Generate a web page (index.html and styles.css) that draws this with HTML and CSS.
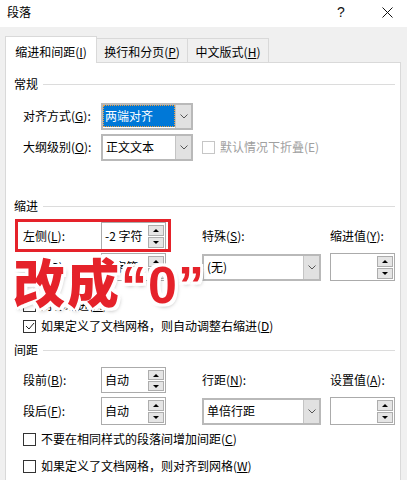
FILE: index.html
```html
<!DOCTYPE html>
<html lang="zh-CN">
<head>
<meta charset="utf-8">
<title>段落</title>
<link rel="stylesheet" href="styles.css">
</head>
<body>
<div class="titlebar">
  <span class="title">段落</span>
  <div class="tb-btns">
    <span class="tb-btn help">?</span>
    <span class="tb-btn close"><svg width="11" height="11" viewBox="0 0 11 11"><path d="M0.5 0.5L10.5 10.5M10.5 0.5L0.5 10.5" stroke="#111" stroke-width="1" fill="none"/></svg></span>
  </div>
</div>
<div class="main">
  <div class="tabs">
    <div class="tab active">缩进和间距(<u>I</u>)</div>
    <div class="tab">换行和分页(<u>P</u>)</div>
    <div class="tab short">中文版式(<u>H</u>)</div>
  </div>
  <div class="panel">
    <div class="sec mt-13">常规</div>
    <div class="row mt-10 h-28">
      <span class="lbl">对齐方式(<u>G</u>):</span>
      <div class="combo small">
        <span class="combo-val"><span class="sel">两端对齐</span></span>
        <span class="combo-btn"><svg width="8" height="5" viewBox="0 0 8 5"><path d="M0.5 0.5L4 4L7.5 0.5" stroke="#555" fill="none"/></svg></span>
      </div>
    </div>
    <div class="row mt-3 h-28">
      <span class="lbl">大纲级别(<u>O</u>):</span>
      <div class="combo small">
        <span class="combo-val">正文文本</span>
        <span class="combo-btn"><svg width="8" height="5" viewBox="0 0 8 5"><path d="M0.5 0.5L4 4L7.5 0.5" stroke="#555" fill="none"/></svg></span>
      </div>
      <span class="check disabled span2"><span class="box"></span><span class="ctext">默认情况下折叠(E)</span></span>
    </div>

    <div class="sec mt-37">缩进</div>
    <div class="row mt-8 h-28">
      <span class="lbl">左侧(<u>L</u>):</span>
      <div class="spin">
        <span class="spin-val">-2 字符</span>
        <span class="arrows"><span class="up"></span><span class="dn"></span></span>
      </div>
      <span class="lbl">特殊(<u>S</u>):</span>
      <span class="lbl">缩进值(<u>Y</u>):</span>
    </div>
    <div class="row mt-3 h-28">
      <span class="lbl">右侧(<u>R</u>):</span>
      <div class="spin">
        <span class="spin-val">0 字符</span>
        <span class="arrows"><span class="up"></span><span class="dn"></span></span>
      </div>
      <div class="combo wide thin">
        <span class="combo-val">(无)</span>
        <span class="combo-btn"><svg width="8" height="5" viewBox="0 0 8 5"><path d="M0.5 0.5L4 4L7.5 0.5" stroke="#555" fill="none"/></svg></span>
      </div>
      <div class="spin">
        <span class="spin-val"></span>
        <span class="arrows"><span class="up"></span><span class="dn"></span></span>
      </div>
    </div>
    <div class="row mt-15 h-18">
      <span class="check span4"><span class="box"></span><span class="ctext">对称缩进(<u>M</u>)</span></span>
    </div>
    <div class="row mt-3 h-18">
      <span class="check span4"><span class="box checked"><svg width="10" height="10" viewBox="0 0 10 10"><path d="M1 5L4 8L9 2" stroke="#222" fill="none"/></svg></span><span class="ctext">如果定义了文档网格，则自动调整右缩进(<u>D</u>)</span></span>
    </div>

    <div class="sec mt-7">间距</div>
    <div class="row mt-9 h-26">
      <span class="lbl">段前(<u>B</u>):</span>
      <div class="spin">
        <span class="spin-val">自动</span>
        <span class="arrows"><span class="up"></span><span class="dn"></span></span>
      </div>
      <span class="lbl">行距(<u>N</u>):</span>
      <span class="lbl">设置值(<u>A</u>):</span>
    </div>
    <div class="row mt-4 h-28">
      <span class="lbl">段后(<u>F</u>):</span>
      <div class="spin">
        <span class="spin-val">自动</span>
        <span class="arrows"><span class="up"></span><span class="dn"></span></span>
      </div>
      <div class="combo wide thin">
        <span class="combo-val">单倍行距</span>
        <span class="combo-btn"><svg width="8" height="5" viewBox="0 0 8 5"><path d="M0.5 0.5L4 4L7.5 0.5" stroke="#555" fill="none"/></svg></span>
      </div>
      <div class="spin">
        <span class="spin-val"></span>
        <span class="arrows"><span class="up"></span><span class="dn"></span></span>
      </div>
    </div>
    <div class="row mt-5 h-18">
      <span class="check span4"><span class="box"></span><span class="ctext">不要在相同样式的段落间增加间距(<u>C</u>)</span></span>
    </div>
    <div class="row mt-9 h-18">
      <span class="check span4"><span class="box"></span><span class="ctext">如果定义了文档网格，则对齐到网格(<u>W</u>)</span></span>
    </div>

    <div class="highlight"></div>
    <div class="callout">改成<span class="latin">“0”</span></div>
  </div>
</div>
</body>
</html>
```
FILE: styles.css
```css
* { box-sizing: border-box; }
html, body { margin: 0; padding: 0; }
body {
  width: 407px;
  height: 480px;
  overflow: hidden;
  background: #f0f0f0;
  color: #000;
  font-family: "Noto Sans CJK SC", "Microsoft YaHei", sans-serif;
  font-size: 12px;
  line-height: 16px;
}
u { text-decoration: underline; text-underline-offset: 1px; }

/* title bar */
.titlebar {
  height: 27px;
  background: #fff;
  display: flex;
  align-items: center;
  padding-left: 7px;
  overflow: hidden;
}
.title { padding-bottom: 3px; }
.tb-btns {
  margin-left: auto;
  margin-right: -3px;
  display: flex;
  height: 100%;
}
.tb-btn {
  width: 46px;
  display: flex;
  align-items: center;
  justify-content: center;
}
.help {
  font-family: "Liberation Sans", sans-serif;
  font-size: 14px;
  color: #111;
  padding-bottom: 3px;
}
.close svg { display: block; margin-top: -3px; }

/* main */
.main {
  padding: 9px 6px 0 5px;
  height: 453px;
}
.tabs {
  display: flex;
  align-items: flex-end;
  margin-bottom: -1px;
}
.tab {
  height: 25px;
  width: 92px;
  border: 1px solid #d9d9d9;
  border-bottom: none;
  background: #f0f0f0;
  text-align: center;
  padding-top: 5px;
  margin-left: -1px;
}
.tab.short { width: 82px; }
.tab.active {
  margin-left: 0;
  height: 27px;
  padding-top: 7px;
  background: #fff;
  position: relative;
  z-index: 1;
}
.panel {
  position: relative;
  height: 430px;
  background: #fff;
  border: 1px solid #d9d9d9;
  padding: 0 5px 0 8px;
}

/* section headings */
.sec {
  display: flex;
  align-items: center;
  height: 16px;
}
.sec::after {
  content: "";
  flex: 1;
  height: 1px;
  background: #dcdcdc;
  margin-left: 5px;
}

/* rows */
.row {
  display: grid;
  grid-template-columns: 78px 101px 128px 65px;
  align-items: center;
  margin-left: 9px;
}
.h-18 { height: 18px; }
.h-26 { height: 26px; }
.h-28 { height: 28px; }
.mt-3 { margin-top: 3px; }
.mt-4 { margin-top: 4px; }
.mt-5 { margin-top: 5px; }
.mt-7 { margin-top: 7px; }
.mt-8 { margin-top: 8px; }
.mt-9 { margin-top: 9px; }
.mt-10 { margin-top: 10px; }
.mt-13 { margin-top: 13px; }
.mt-15 { margin-top: 15px; }
.mt-37 { margin-top: 37px; }
.span2 { grid-column: span 2; }
.span4 { grid-column: span 4; }

/* combobox */
.combo {
  display: flex;
  height: 27px;
  border: 2px solid #b9b9b9;
  background: #fff;
}
.combo.small { width: 92px; }
.combo.wide { width: 119px; }
.combo-val {
  flex: 1;
  display: flex;
  align-items: center;
  padding-left: 3px;
  white-space: nowrap;
}
.combo .sel {
  flex: 1;
  align-self: stretch;
  margin: 0 0 1px -3px;
  padding-left: 2px;
  display: flex;
  align-items: center;
  background: #0078d7;
  color: #fff;
  outline: 1px dotted #f0a040;
  outline-offset: -1px;
}
.combo-btn {
  width: 16px;
  background: #e1e1e1;
  border-left: 1px solid #c4c4c4;
  display: flex;
  align-items: center;
  justify-content: center;
}
.combo-btn svg { display: block; }

/* spin box */
.spin {
  display: flex;
  width: 65px;
  height: 28px;
  border: 1px solid #ababab;
  background: #fff;
}
.h-26 .spin { height: 26px; }
.spin-val {
  flex: 1;
  display: flex;
  align-items: center;
  padding-left: 3px;
  white-space: nowrap;
}
.arrows {
  width: 17px;
  display: flex;
  flex-direction: column;
  gap: 1px;
  padding: 2px 1px 1px 0;
}
.up, .dn {
  flex: 1;
  background: #e5e5e5;
  border: 1px solid #adadad;
  display: flex;
  align-items: center;
  justify-content: center;
}
.up::before, .dn::before {
  content: "";
  width: 0;
  height: 0;
  border-left: 3px solid transparent;
  border-right: 3px solid transparent;
}
.up::before { border-bottom: 3px solid #000; }
.dn::before { border-top: 3px solid #000; }

/* checkbox */
.check {
  display: flex;
  align-items: center;
  gap: 5px;
  white-space: nowrap;
}
.box {
  width: 13px;
  height: 13px;
  border: 1px solid #333;
  background: #fff;
  display: flex;
  align-items: center;
  justify-content: center;
  flex: none;
}
.box svg { display: block; }
.check.disabled { color: #a0a0a0; }
.check.disabled .box { border-color: #c6c6c6; }

/* annotation overlays */
.highlight {
  position: absolute;
  left: 9px;
  top: 156px;
  width: 156px;
  height: 33px;
  border: 3px solid #e5222a;
}
.callout {
  position: absolute;
  left: 7px;
  top: 192px;
  font-family: "Noto Sans CJK SC", sans-serif;
  font-weight: 900;
  font-size: 52px;
  line-height: 52px;
  letter-spacing: 2px;
  color: #e5222a;
  white-space: nowrap;
  text-shadow:
    -3px -3px 0 #fff, 3px -3px 0 #fff, -3px 3px 0 #fff, 3px 3px 0 #fff,
    0 -3px 0 #fff, 0 3px 0 #fff, -3px 0 0 #fff, 3px 0 0 #fff,
    2px 3px 4px rgba(0, 0, 0, 0.35);
}
.callout .latin {
  font-family: "Liberation Sans", sans-serif;
  font-weight: 700;
  letter-spacing: 1px;
}
```
